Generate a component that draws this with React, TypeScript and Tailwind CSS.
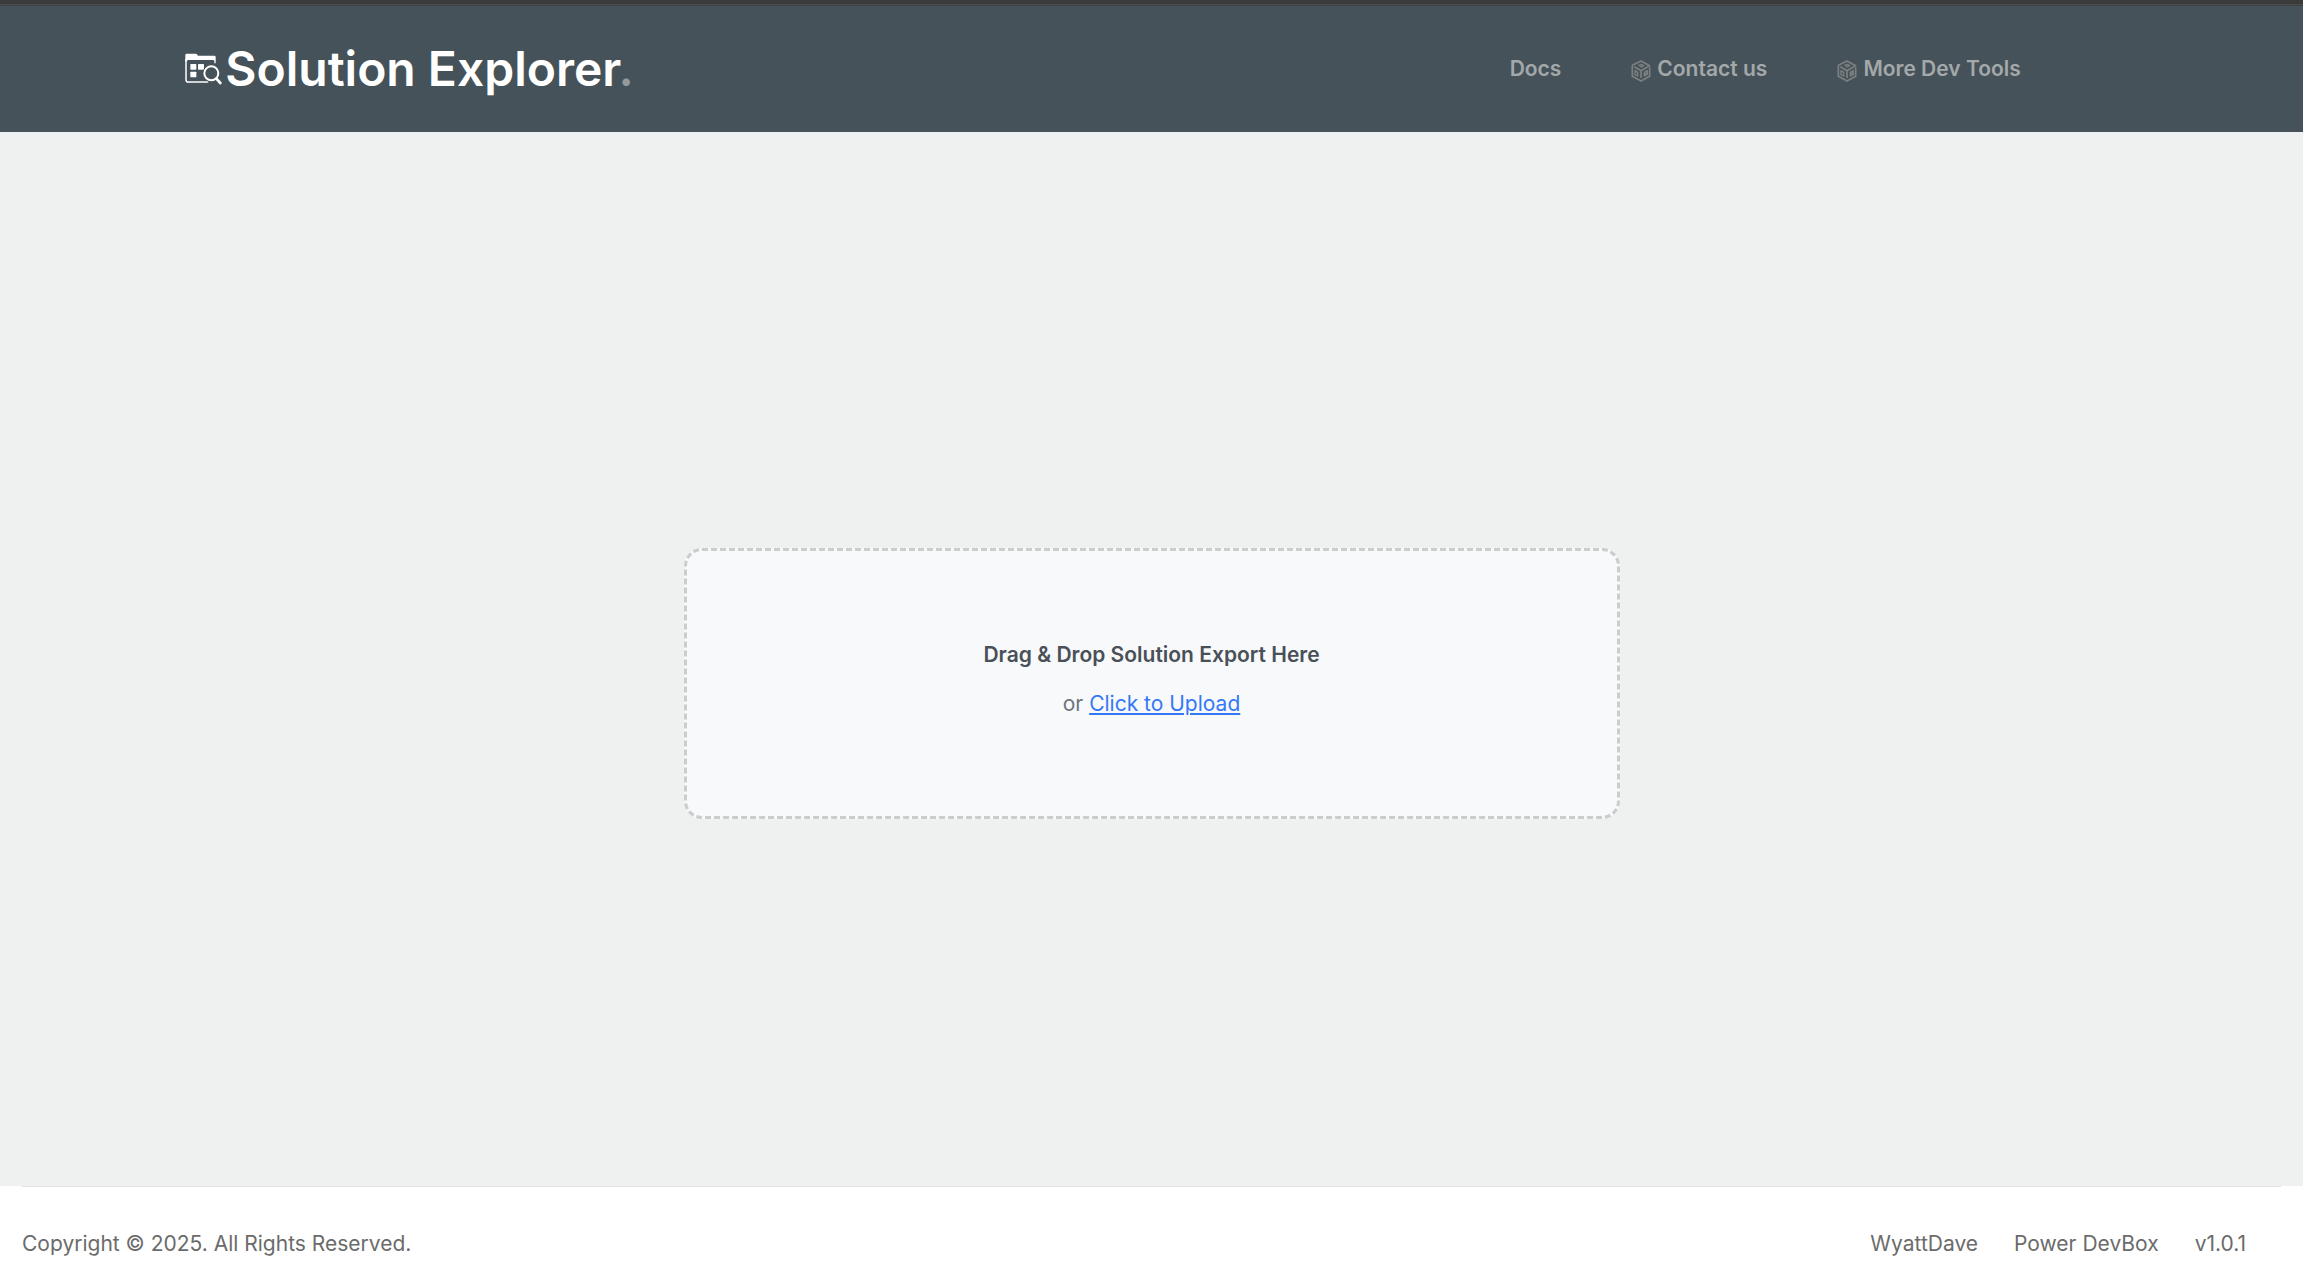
import { ReactNode, useRef, useState } from "react";

const footerLinks = [
  { label: "WyattDave", href: "#wyattdave" },
  { label: "Power DevBox", href: "#power-devbox" },
  { label: "v1.0.1", href: "#version" },
];

function FolderSearchIcon() {
  return (
    <svg width="38" height="33" viewBox="-3 1 114 99" fill="none" aria-hidden="true">
      <path
        d="M1 26V7q0-4 4-4h27q3 0 5 3l2 3h49q4 0 4 4v19h-4v-6q0-4-4-4H10q-4 0-4 4z"
        fill="#fff"
      />
      <path
        d="M3 20v61q0 7 7 7h58"
        stroke="#fff"
        strokeWidth="4.5"
        strokeLinecap="round"
      />
      <rect x="16" y="34" width="18" height="17" rx="2" fill="#fff" />
      <rect x="39" y="34" width="18" height="17" rx="2" fill="#fff" />
      <rect x="16" y="57" width="18" height="17" rx="2" fill="#fff" />
      <circle cx="79" cy="62" r="26" fill="#465259" />
      <circle cx="79" cy="62" r="21" stroke="#fff" strokeWidth="6" />
      <path d="M94 78l12 13" stroke="#fff" strokeWidth="8" strokeLinecap="round" />
    </svg>
  );
}

function CubeIcon() {
  return (
    <svg
      width="20"
      height="22"
      viewBox="0 0 60 66"
      fill="none"
      stroke="#7c8083"
      strokeWidth="5"
      strokeLinejoin="round"
      className="mt-[3px]"
      aria-hidden="true"
    >
      <path d="M4 16L30 3l26 14-8 5" />
      <path d="M4 16v33l26 14 26-14V22" />
      <path d="M10 20l20 12 18-10M30 32v22" />
      <path d="M22 17l8-4 8 4-8 4M26 21l5-3" strokeWidth="4" />
      <path d="M12 32v12l8 4V37zM40 37v11l9-5V32zM40 43l9-5" strokeWidth="4" />
    </svg>
  );
}

interface NavLinkProps {
  href: string;
  icon?: ReactNode;
  children: ReactNode;
}

function NavLink({ href, icon, children }: NavLinkProps) {
  return (
    <a
      href={href}
      className="flex items-center gap-[6px] text-[21px] leading-8 font-semibold text-[#a3a8ab] hover:text-white"
    >
      {icon}
      {children}
    </a>
  );
}

function Header() {
  return (
    <header className="border-t-4 border-[#3b3b3b] bg-[#465259]">
      <div className="h-[2px] border-t border-[#4a4a4a] bg-[#3f4345]" />
      <div className="flex items-center justify-between px-[8%] py-[27px]">
        <a href="#home" className="flex items-center gap-[3px] text-white">
          <FolderSearchIcon />
          <h1 className="text-5xl leading-[72px] font-semibold">
            Solution Explorer<span className="text-[#93999c]">.</span>
          </h1>
        </a>
        <nav className="flex items-center gap-[70px] pr-[98px]">
          <NavLink href="#docs">Docs</NavLink>
          <NavLink href="#contact" icon={<CubeIcon />}>
            Contact us
          </NavLink>
          <NavLink href="#tools" icon={<CubeIcon />}>
            More Dev Tools
          </NavLink>
        </nav>
      </div>
    </header>
  );
}

function DropZone() {
  const inputRef = useRef<HTMLInputElement>(null);
  const [fileName, setFileName] = useState("");

  const onDrop = (e: React.DragEvent<HTMLDivElement>) => {
    e.preventDefault();
    setFileName(e.dataTransfer.files[0]?.name ?? "");
  };

  return (
    <div
      onDragOver={(e) => e.preventDefault()}
      onDrop={onDrop}
      className="w-full max-w-[936px] rounded-[18px] border-3 border-dashed border-[#cccccc] bg-[#f8f9fb] px-6 pt-[88px] pb-[96px] text-center text-[21px] leading-8"
    >
      <p className="font-semibold text-[#495057]">
        {fileName || "Drag & Drop Solution Export Here"}
      </p>
      <p className="mt-[17px] text-[#6c757d]">
        or{" "}
        <button
          type="button"
          onClick={() => inputRef.current?.click()}
          className="cursor-pointer text-[#3578f6] underline"
        >
          Click to Upload
        </button>
      </p>
      <input
        ref={inputRef}
        type="file"
        accept=".zip"
        aria-label="Solution export"
        onChange={(e) => setFileName(e.target.files?.[0]?.name ?? "")}
        className="hidden"
      />
    </div>
  );
}

function Footer() {
  return (
    <footer className="bg-white px-[22px] text-[21px] leading-8 text-[#6b6b6b]">
      <div className="flex items-center justify-between border-t border-[#dee2e6] pt-[41px] pb-[23px]">
        <p>Copyright © 2025. All Rights Reserved.</p>
        <ul className="flex gap-9 pr-[35px]">
          {footerLinks.map((link) => (
            <li key={link.label}>
              <a href={link.href} className="hover:underline">
                {link.label}
              </a>
            </li>
          ))}
        </ul>
      </div>
    </footer>
  );
}

export default function App() {
  return (
    <div className="flex min-h-screen flex-col bg-[#eff1f0] font-['Inter',sans-serif]">
      <Header />
      <main className="flex flex-1 items-center justify-center px-6 pt-12">
        <DropZone />
      </main>
      <Footer />
    </div>
  );
}
